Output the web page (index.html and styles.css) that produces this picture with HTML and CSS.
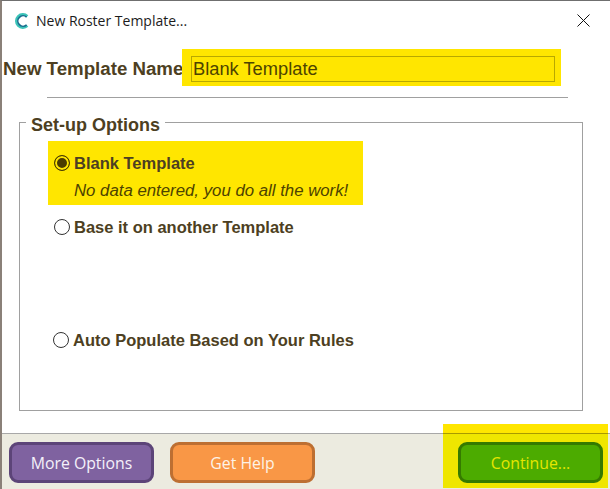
FILE: index.html
```html
<!DOCTYPE html>
<html lang="en">
<head>
  <meta charset="UTF-8" />
  <meta name="viewport" content="width=device-width, initial-scale=1" />
  <title>New Roster Template...</title>
  <link rel="stylesheet" href="styles.css">
</head>
<body>
  <div class="dialog">
    <div class="title-bar">
      <svg class="app-icon" width="16" height="16" viewBox="0 0 16 16" aria-hidden="true">
        <path d="M13.4 3.2A6.6 6.6 0 1 0 13.4 12.8" fill="none" stroke="#3cc4b8" stroke-width="2.6"/>
        <path d="M12.6 4.2A5.2 5.2 0 1 0 12.6 11.8" fill="none" stroke="#176a8c" stroke-width="1.6"/>
      </svg>
      <span class="title-text">New Roster Template...</span>
      <svg class="close-icon" width="13" height="13" viewBox="0 0 13 13" aria-hidden="true">
        <path d="M0.5 0.5L12.5 12.5M12.5 0.5L0.5 12.5" stroke="#111" stroke-width="1"/>
      </svg>
    </div>

    <div class="name-row">
      <label class="name-label" for="template-name">New Template Name</label>
      <div class="name-mark">
        <input class="name-input" id="template-name" type="text" value="Blank Template">
      </div>
    </div>

    <div class="divider"></div>

    <fieldset class="options">
      <legend>Set-up Options</legend>

      <div class="option option-marked">
        <div class="option-row">
          <span class="radio radio-on"></span>
          <span class="option-name">Blank Template</span>
        </div>
        <div class="option-note">No data entered, you do all the work!</div>
      </div>

      <div class="option option-base">
        <div class="option-row">
          <span class="radio"></span>
          <span class="option-name">Base it on another Template</span>
        </div>
      </div>

      <div class="option option-auto">
        <div class="option-row">
          <span class="radio"></span>
          <span class="option-name">Auto Populate Based on Your Rules</span>
        </div>
      </div>
    </fieldset>

    <div class="footer">
      <button class="btn btn-purple">More Options</button>
      <button class="btn btn-orange">Get Help</button>
      <div class="continue-mark">
        <button class="btn btn-green">Continue...</button>
      </div>
    </div>
  </div>
</body>
</html>
```

FILE: styles.css
```css
html, body {
  margin: 0;
  padding: 0;
  background-color: #fff;
}

.dialog {
  width: 610px;
  height: 489px;
  box-sizing: border-box;
  border-top: 1px solid #6f6f6f;
  border-left: 2px solid #8a8078;
  display: flex;
  flex-direction: column;
  overflow: hidden;
  font-family: "Liberation Sans", Arial, sans-serif;
  color: #4d3f22;
}

.title-bar {
  height: 39px;
  display: flex;
  align-items: center;
  padding: 0 20px 0 12px;
  flex-shrink: 0;
}

.app-icon {
  margin-right: 6px;
}

.title-text {
  font-family: "Open Sans", sans-serif;
  font-size: 14px;
  color: #1c1c1c;
}

.close-icon {
  margin-left: auto;
}

.name-row {
  display: flex;
  align-items: center;
  height: 37px;
  margin-top: 9px;
  padding-left: 1px;
}

.name-label {
  width: 179px;
  padding-top: 2px;
  font-size: 18.7px;
  font-weight: 700;
  white-space: nowrap;
}

.name-mark {
  width: 379px;
  height: 37px;
  box-sizing: border-box;
  background-color: #ffe600;
  padding: 7px 6px 4px 9px;
}

.name-input {
  display: block;
  width: 100%;
  height: 26px;
  box-sizing: border-box;
  margin: 0;
  padding: 0 1px;
  border: 1px solid #b8a800;
  background-color: transparent;
  font-family: "Liberation Sans", Arial, sans-serif;
  font-size: 18.3px;
  color: #4d4300;
}

.divider {
  width: 521px;
  height: 1px;
  margin: 11px 0 0 45px;
  background-color: #a0a0a0;
}

.options {
  width: 564px;
  height: 301px;
  box-sizing: border-box;
  margin: 12px 0 0 17px;
  padding: 0;
  border: 1px solid #a0a0a0;
  display: block;
  flex-shrink: 0;
}

.options legend {
  margin-left: 6px;
  padding: 5px 5px 0;
  font-size: 18px;
  font-weight: 700;
  line-height: 20px;
}

.option {
  margin-left: 28px;
}

.option-marked {
  width: 315px;
  height: 64px;
  box-sizing: border-box;
  margin-top: 6px;
  padding: 12px 0 0 6px;
  background-color: #ffe600;
}

.option-base {
  margin-top: 12px;
  padding-left: 6px;
}

.option-auto {
  margin-top: 93px;
  padding-left: 5px;
}

.option-row {
  display: flex;
  align-items: center;
  height: 20px;
  gap: 4px;
}

.radio {
  width: 16px;
  height: 16px;
  box-sizing: border-box;
  border: 1px solid #333;
  border-radius: 50%;
  background-color: #fff;
  flex-shrink: 0;
}

.radio-on {
  background-color: #4a3c00;
  border: 1px solid #4a3c00;
  box-shadow: inset 0 0 0 2px #ffe600;
}

.option-name {
  font-size: 16.5px;
  font-weight: 700;
  white-space: nowrap;
}

.option-note {
  margin: 8px 0 0 20px;
  font-size: 16.8px;
  font-style: italic;
  color: #4d4300;
  white-space: nowrap;
}

.footer {
  height: 56px;
  box-sizing: border-box;
  margin-top: 22px;
  flex-shrink: 0;
  border-top: 1px solid #a8a8a8;
  background-color: #ecebe0;
  display: flex;
  align-items: flex-start;
  gap: 16px;
  padding: 8px 0 0 7px;
  position: relative;
}

.btn {
  width: 145px;
  height: 41px;
  box-sizing: border-box;
  border-radius: 9px;
  border: 3px solid;
  font-family: "Open Sans", sans-serif;
  font-size: 15.8px;
  padding: 0;
}

.btn-purple {
  background-color: #7f62a0;
  border-color: #5c4478;
  color: #f4f0fa;
}

.btn-orange {
  background-color: #f99746;
  border-color: #bd6f32;
  color: #fdf3e8;
}

.btn-green {
  background-color: #4cab00;
  border-color: #357a00;
  color: #e6e600;
}

/* yellow highlight sits over the footer edge */
.continue-mark {
  position: absolute;
  left: 441px;
  top: -10px;
  width: 165px;
  height: 64px;
  box-sizing: border-box;
  padding: 18px 0 0 15px;
  background: linear-gradient(#ffe600 9px, #a89a00 9px, #a89a00 10px, #efe600 10px);
}
```
